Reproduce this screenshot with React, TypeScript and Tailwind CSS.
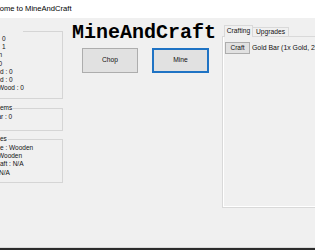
import React from "react";

function Line({ children, className = "" }: { children: React.ReactNode; className?: string }) {
  return <div className={"whitespace-nowrap leading-[8.2px] h-[8.2px] " + className}>{children}</div>;
}

export default function App() {
  return (
    <div className="w-[315px] h-[250px] overflow-hidden bg-[#f0f0f0] flex flex-col text-[#111] font-['Liberation_Sans',Arial,sans-serif]">
      {/* title bar */}
      <div className="h-[18px] shrink-0 bg-white flex items-center">
        <span className="ml-[-17px] text-[7.6px] leading-none whitespace-nowrap text-black">Welcome to MineAndCraft</span>
      </div>

      {/* body */}
      <div className="flex flex-1 min-h-0">
        {/* left column with group boxes */}
        <div className="w-[63px] shrink-0 flex flex-col pt-[13px] text-[6.5px]">
          <div className="relative h-[68px] border-t border-r border-b border-[#d5d5d5] pt-[3px]">
            <div className="absolute left-0 top-[-1px] w-[23px] h-[1px] bg-[#f0f0f0]" />
            <Line className="ml-[2px]">0</Line>
            <Line className="ml-[2px]">1</Line>
            <Line className="ml-[-1.5px]">n</Line>
            <Line className="ml-[-1.5px]">0</Line>
            <Line>d : 0</Line>
            <Line>d : 0</Line>
            <Line className="ml-[-2px]">Wood : 0</Line>
          </div>

          <div className="relative mt-[9px] h-[23px] border-t border-r border-b border-[#d5d5d5] pt-[4px]">
            <div className="absolute left-0 top-[-5px] bg-[#f0f0f0] pr-[1px] leading-[8.2px] whitespace-nowrap">ems</div>
            <Line className="ml-[-2.6px]">ar : 0</Line>
          </div>

          <div className="relative mt-[8px] h-[44px] border-t border-r border-b border-[#d5d5d5] pt-[4px]">
            <div className="absolute left-0 top-[-5px] bg-[#f0f0f0] pr-[1px] leading-[8.2px] whitespace-nowrap">es</div>
            <Line>e : Wooden</Line>
            <Line className="ml-[-2px]">Wooden</Line>
            <Line>aft : N/A</Line>
            <Line className="ml-[-1px]">N/A</Line>
          </div>
        </div>

        {/* middle column */}
        <div className="w-[159px] shrink-0 flex flex-col pt-[5px]">
          <div className="ml-[9px] font-['Liberation_Mono','Courier_New',monospace] font-bold text-[20px] leading-[20px] text-black whitespace-nowrap">
            MineAndCraft
          </div>
          <div className="flex mt-[5px] ml-[19px] gap-[14px]">
            <div className="w-[56px] h-[25px] border border-[#adadad] bg-[#e1e1e1] flex items-center justify-center text-[6.7px]">
              Chop
            </div>
            <div className="w-[57px] h-[25px] border-2 border-[#1f73c4] bg-[#e1e1e1] flex items-center justify-center text-[6.7px]">
              Mine
            </div>
          </div>
        </div>

        {/* tab control */}
        <div className="shrink-0 w-[130px] flex flex-col pt-[7px] text-[6.7px]">
          <div className="flex items-end h-[11px] pl-[2px]">
            <div className="relative z-10 w-[29px] h-[12px] mb-[-1px] border-t border-l border-r border-[#d9d9d9] bg-[#f0f0f0] flex items-center justify-center whitespace-nowrap pb-[1px]">
              Crafting
            </div>
            <div className="w-[36px] h-[9px] border-t border-r border-[#d9d9d9] bg-[#f0f0f0] flex items-center justify-center whitespace-nowrap">
              Upgrades
            </div>
          </div>
          <div className="h-[172px] border border-[#d9d9d9]">
            <div className="h-full border-l border-b border-white pt-[5px] pl-[1px]">
              <div className="flex items-center">
                <div className="w-[25px] h-[12px] border border-[#adadad] bg-[#e1e1e1] flex items-center justify-center text-[6.5px]">
                  Craft
                </div>
                <span className="ml-[2px] whitespace-nowrap text-[6.9px]">Gold Bar (1x Gold, 2x Coal)</span>
              </div>
            </div>
          </div>
        </div>
      </div>

      {/* bottom edge */}
      <div className="h-[1px] shrink-0 bg-[#dadada]" />
      <div className="h-[2px] shrink-0 bg-[#2b2b2b]" />
    </div>
  );
}
